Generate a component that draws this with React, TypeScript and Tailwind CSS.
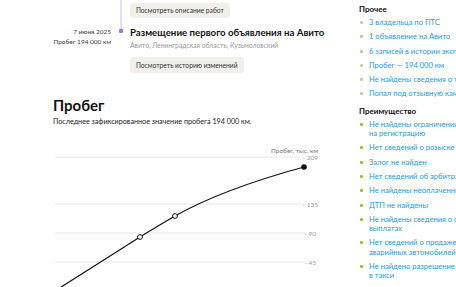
import React from "react";

const font = { fontFamily: "Lato, 'Liberation Sans', sans-serif" };

function Item({ lines, bullet }: { lines: string[]; bullet: string }) {
  return (
    <div className="flex items-start">
      <div className={`mt-[3px] ml-[1px] h-[3px] w-[3px] flex-none rounded-[1px] ${bullet}`} />
      <div className="ml-[6px] flex flex-col text-[7.6px] leading-[9.3px] text-[#1a9ae6] whitespace-nowrap">
        {lines.map((l, i) => (
          <span key={i}>{l}</span>
        ))}
      </div>
    </div>
  );
}

export default function App() {
  const other = [
    ["3 владельца по ПТС"],
    ["1 объявление на Авито"],
    ["6 записей в истории эксплуатации"],
    ["Пробег — 194\u202f000 км"],
    ["Не найдены сведения о техосмотрах"],
    ["Попал под отзывную кампанию"],
  ];
  const adv = [
    ["Не найдены ограничения", "на регистрацию"],
    ["Нет сведений о розыске"],
    ["Залог не найден"],
    ["Нет сведений об арбитражных делах"],
    ["Не найдены неоплаченные штрафы"],
    ["ДТП не найдены"],
    ["Не найдены сведения о страховых", "выплатах"],
    ["Нет сведений о продаже на аукционах", "аварийных автомобилей"],
    ["Не найдено разрешение на работу", "в такси"],
    ["Не найдены сведения"],
  ];
  return (
    <div className="flex h-[287px] w-[456px] overflow-hidden bg-white text-[#222]" style={font}>
      {/* main column */}
      <div className="w-[359px] flex-none flex flex-col items-start">
        {/* row A */}
        <div className="flex h-[36px]">
          <div className="w-[111px] flex-none" />
          <div className="w-[19px] flex-none flex justify-center">
            <div className="ml-[1px] h-full w-[2px] bg-[#e8dcfd]" />
          </div>
          <div className="pt-[3px]">
            <div className="flex h-[15px] items-center rounded-[3px] bg-[#f2f0ea] px-[6px] text-[6.7px] text-[#333] whitespace-nowrap">
              Посмотреть описание работ
            </div>
          </div>
        </div>
        {/* row B */}
        <div className="flex">
          <div className="w-[111px] flex-none flex flex-col items-end text-[6.5px] leading-[10px] text-[#3a3a3a]">
            <span>7 июня 2025</span>
            <span>Пробег 194{"\u202f"}000 км</span>
          </div>
          <div className="w-[19px] flex-none flex flex-col items-center">
            <div className="ml-[1px] h-[2px] w-[2px] bg-[#e8dcfd]" />
            <div className="ml-[1px] h-[4px] w-[4px] rounded-[1px] bg-[#a06cf8]" />
          </div>
          <div className="flex flex-col">
            <div className="text-[9.7px] font-bold leading-[11px] text-[#111] whitespace-nowrap">
              Размещение первого объявления на Авито
            </div>
            <div className="mt-[2px] text-[6.8px] leading-[10px] text-[#999] whitespace-nowrap">
              Авито, Ленинградская область, Кузьмоловский
            </div>
            <div className="mt-[7px] flex">
              <div className="flex h-[16px] items-center rounded-[3px] bg-[#f2f0ea] px-[6px] text-[6.7px] text-[#333] whitespace-nowrap">
                Посмотреть историю изменений
              </div>
            </div>
          </div>
        </div>
        {/* Пробег */}
        <div className="ml-[53px] mt-[23px] text-[15px] font-bold leading-[18px] text-[#111]">Пробег</div>
        <div className="ml-[53px] mt-[2px] text-[7.2px] leading-[11px] text-[#222] whitespace-nowrap">
          Последнее зафиксированное значение пробега 194{"\u202f"}000 км.
        </div>
        <div className="ml-[53px] mt-[10px] h-[150px] w-[270px] flex-none">
          <svg width="270" height="150" viewBox="0 0 270 150" className="block">
            <g transform="translate(-53,-140)" fontFamily="Lato, 'Liberation Sans', sans-serif" fontSize="6.5" fill="#888">
              <line x1="55" y1="160" x2="300" y2="160" stroke="#e6e6e6" strokeWidth="1" />
              <line x1="55" y1="207" x2="306" y2="207" stroke="#e6e6e6" strokeWidth="1" />
              <line x1="55" y1="236" x2="306" y2="236" stroke="#e6e6e6" strokeWidth="1" />
              <line x1="55" y1="265" x2="306" y2="265" stroke="#e6e6e6" strokeWidth="1" />
              <text x="318" y="156" textAnchor="end" fill="#777">Пробег, тыс. км</text>
              <text x="318" y="163" textAnchor="end" fill="#999">- 209</text>
              <text x="318" y="209.5" textAnchor="end" fill="#999">- 135</text>
              <text x="316" y="238.5" textAnchor="end" fill="#999">- 90</text>
              <text x="316" y="267.5" textAnchor="end" fill="#999">- 45</text>
              <path
                d="M 58 292 L 140 240 C 152 232.5 163 226 175 219 C 212 198 260 182 304 170"
                fill="none"
                stroke="#111"
                strokeWidth="1.2"
              />
              <circle cx="140" cy="240" r="2.4" fill="#fff" stroke="#111" strokeWidth="1" />
              <circle cx="175" cy="219" r="2.4" fill="#fff" stroke="#111" strokeWidth="1" />
              <circle cx="304" cy="170" r="2.8" fill="#111" />
            </g>
          </svg>
        </div>
      </div>
      {/* sidebar */}
      <div className="flex flex-col pt-[4px]">
        <div className="text-[8px] font-bold leading-[10px] text-[#111]">Прочее</div>
        <div className="mt-[4px] flex flex-col gap-[5px]">
          {other.map((l, i) => (
            <Item key={i} lines={l} bullet="bg-[#cdc79c]" />
          ))}
        </div>
        <div className="mt-[7px] text-[8px] font-bold leading-[10px] text-[#111]">Преимущество</div>
        <div className="mt-[4px] flex flex-col gap-[5px]">
          {adv.map((l, i) => (
            <Item key={i} lines={l} bullet="bg-[#8dc63f]" />
          ))}
        </div>
      </div>
    </div>
  );
}
